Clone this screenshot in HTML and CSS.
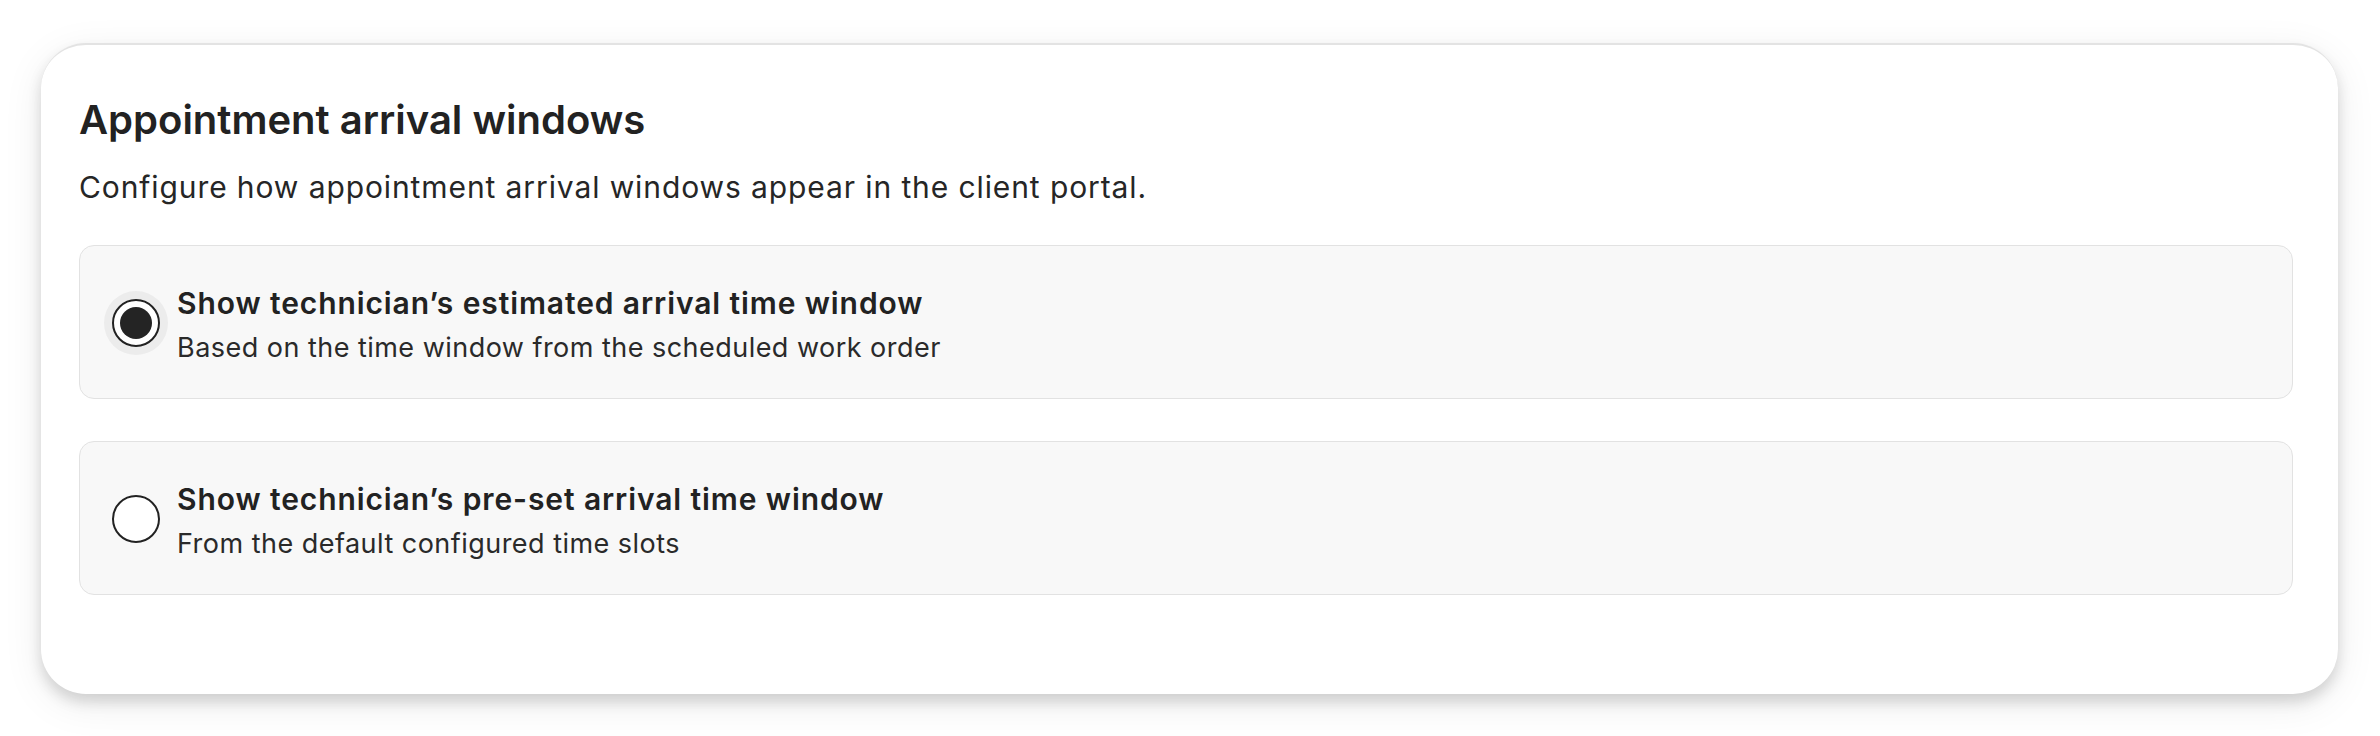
FILE: index.html
```html
<!DOCTYPE html>
<html lang="en">
<head>
<meta charset="utf-8">
<title>Appointment arrival windows</title>
<link rel="stylesheet" href="styles.css">
</head>
<body>
<section class="card">
  <h2 class="card-title">Appointment arrival windows</h2>
  <p class="card-desc">Configure how appointment arrival windows appear in the client portal.</p>
  <div class="options">
    <label class="option">
      <span class="radio radio--checked"><span class="radio-dot"></span></span>
      <span class="option-text">
        <span class="option-title">Show technician’s estimated arrival time window</span>
        <span class="option-sub">Based on the time window from the scheduled work order</span>
      </span>
    </label>
    <label class="option">
      <span class="radio"></span>
      <span class="option-text">
        <span class="option-title">Show technician’s pre-set arrival time window</span>
        <span class="option-sub">From the default configured time slots</span>
      </span>
    </label>
  </div>
</section>
</body>
</html>
```

FILE: styles.css
```css
* { box-sizing: border-box; }
html, body { margin: 0; padding: 0; background: #ffffff; }
body {
  font-family: Inter, "Noto Sans", "Liberation Sans", sans-serif;
  font-optical-sizing: none;
  font-variation-settings: "opsz" 14;
  color: #222222;
  padding: 43px 42px 0 41px;
  min-height: 736px;
}
.card {
  background: #ffffff;
  border-top: 2px solid #e3e3e3;
  border-radius: 45px;
  padding: 51px 45px 99px 38px;
  box-shadow: 0 8px 14px rgba(0,0,0,0.14), 0 10px 40px rgba(0,0,0,0.08);
}
.card-title {
  margin: 0;
  font-size: 40px;
  line-height: 48px;
  font-weight: 600;
  letter-spacing: 0;
  color: #222222;
}
.card-desc {
  margin: 21px 0 0;
  font-size: 30px;
  line-height: 45px;
  font-weight: 400;
  letter-spacing: 0.9px;
  color: #262626;
}
.options {
  margin-top: 35px;
  display: flex;
  flex-direction: column;
  gap: 42px;
}
.option {
  display: flex;
  align-items: center;
  gap: 17px;
  height: 154px;
  padding: 1px 32px 0;
  background: #f8f8f8;
  border: 1.5px solid #e2e2e2;
  border-radius: 15px;
}
.radio {
  flex: none;
  width: 48px;
  height: 48px;
  border-radius: 50%;
  border: 2px solid #222222;
  background: #ffffff;
  display: flex;
  align-items: center;
  justify-content: center;
}
.radio--checked {
  box-shadow: 0 0 0 8px #ececec;
}
.radio-dot {
  width: 32px;
  height: 32px;
  border-radius: 50%;
  background: #242424;
}
.option-text {
  display: flex;
  flex-direction: column;
  gap: 5px;
  margin-top: 6px;
}
.option-title {
  font-size: 30px;
  line-height: 40px;
  font-weight: 600;
  letter-spacing: 0.9px;
  color: #222222;
}
.option-sub {
  font-size: 27px;
  line-height: 40px;
  font-weight: 400;
  letter-spacing: 0.47px;
  color: #2a2a2a;
}
```
